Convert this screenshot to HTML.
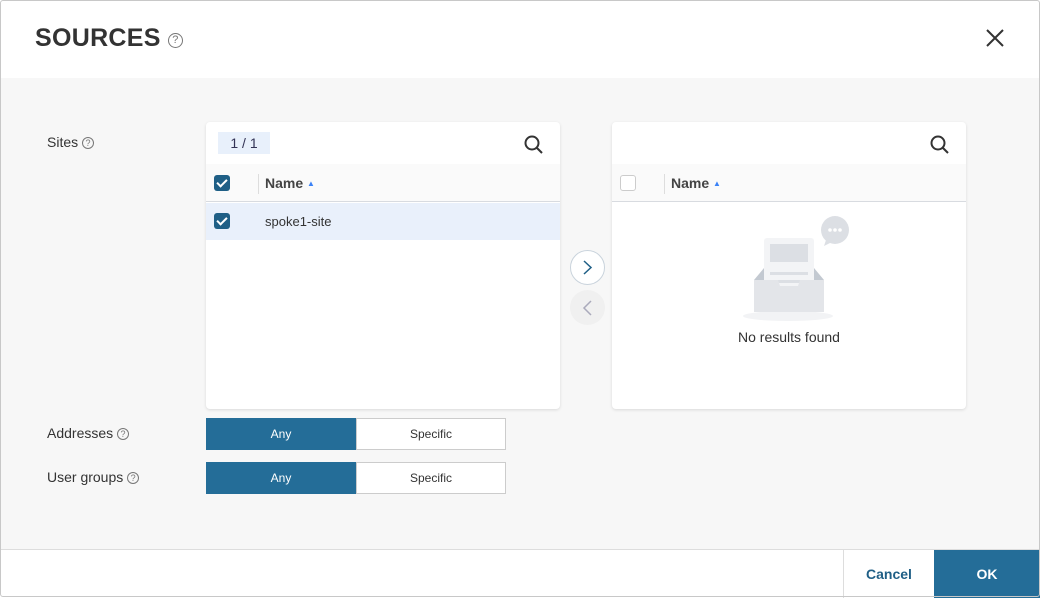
<!DOCTYPE html>
<html><head><style>
*{box-sizing:border-box;margin:0;padding:0}
body{width:1040px;height:597px;font-family:"Liberation Sans",sans-serif;background:#fff;position:relative;overflow:hidden;color:#333}
.frame{position:absolute;inset:0;border:1px solid #c8c8c8;border-radius:3px}
.hdr{position:absolute;left:0;top:0;width:1040px;height:78px;background:#fff}
.body{position:absolute;left:1px;top:78px;width:1038px;height:471px;background:#f7f7f7}
.ftr{position:absolute;left:0;top:549px;width:1040px;height:48px;border-top:1px solid #ddd;background:#fff}
.abs{position:absolute}
.q{display:inline-block;width:12px;height:12px;border:1px solid #777;border-radius:50%;font-size:9px;line-height:10px;text-align:center;color:#777;vertical-align:middle}
.lbl{position:absolute;font-size:14px;color:#333}
.panel{position:absolute;background:#fff;border-radius:4px;box-shadow:0 1px 3px rgba(0,0,0,.12)}
.th{position:absolute;left:0;top:42px;width:100%;height:38px;background:#fafafa;border-bottom:1px solid #d8dbe0}
.cb{position:absolute;width:16px;height:16px;border-radius:3px;background:#1f5f86}
.cb:after{content:"";position:absolute;left:5px;top:2px;width:4px;height:8px;border:solid #fff;border-width:0 2px 2px 0;transform:rotate(45deg)}
.seg{position:absolute;height:32px;font-size:12px;line-height:30px;text-align:center;border:1px solid #ccc}
</style></head><body>
<div class="hdr"><div class="abs" style="left:35px;top:24px;font-size:25px;font-weight:bold;color:#333;letter-spacing:.3px">SOURCES <span class="q" style="width:15px;height:15px;font-size:11px;line-height:13px;font-weight:normal;vertical-align:3px">?</span></div>
<svg class="abs" style="left:985px;top:28px" width="20" height="20"><path d="M2 2L18 18M18 2L2 18" stroke="#333" stroke-width="2"/></svg></div>
<div class="body">
<div class="lbl" style="left:46px;top:56px">Sites <span class="q">?</span></div>
<div class="lbl" style="left:46px;top:347px">Addresses <span class="q">?</span></div>
<div class="lbl" style="left:46px;top:391px">User groups <span class="q">?</span></div>
<div class="panel" style="left:205px;top:44px;width:354px;height:287px">
 <div class="abs" style="left:12px;top:10px;width:52px;height:22px;background:#e8f0fb;font-size:14px;line-height:22px;text-align:center;color:#335">1 / 1</div>
 <svg class="abs" style="left:318px;top:13px" width="20" height="20"><circle cx="8" cy="8" r="6.5" fill="none" stroke="#333" stroke-width="2"/><path d="M13 13L18 18" stroke="#333" stroke-width="2"/></svg>
 <div class="th"><div class="cb" style="left:8px;top:11px"></div><div class="abs" style="left:52px;top:10px;width:1px;height:20px;background:#ddd"></div><div class="abs" style="left:59px;top:11px;font-size:14px;font-weight:bold;color:#444">Name <span style="font-size:8px;color:#3b82f6;vertical-align:2px">▲</span></div></div>
 <div class="abs" style="left:0;top:81px;width:100%;height:37px;background:#e9f0fb"><div class="cb" style="left:8px;top:10px"></div><div class="abs" style="left:59px;top:11px;font-size:13px;color:#333">spoke1-site</div></div>
</div>
<div class="abs" style="left:569px;top:172px;width:35px;height:35px;border:1px solid #c9d3dc;border-radius:50%;background:#fff"><svg width="33" height="33"><path d="M13 10L20 16.5L13 23" fill="none" stroke="#1f5f86" stroke-width="1.5"/></svg></div>
<div class="abs" style="left:569px;top:212px;width:35px;height:35px;border-radius:50%;background:#f0f0f0"><svg width="35" height="35"><path d="M21 11L14 18L21 25" fill="none" stroke="#aab" stroke-width="1.5"/></svg></div>
<div class="panel" style="left:611px;top:44px;width:354px;height:287px">
 <svg class="abs" style="left:318px;top:13px" width="20" height="20"><circle cx="8" cy="8" r="6.5" fill="none" stroke="#333" stroke-width="2"/><path d="M13 13L18 18" stroke="#333" stroke-width="2"/></svg>
 <div class="th"><div class="abs" style="left:8px;top:11px;width:16px;height:16px;border:1px solid #ccc;border-radius:3px;background:#fff"></div><div class="abs" style="left:52px;top:10px;width:1px;height:20px;background:#ddd"></div><div class="abs" style="left:59px;top:11px;font-size:14px;font-weight:bold;color:#444">Name <span style="font-size:8px;color:#3b82f6;vertical-align:2px">▲</span></div></div>
 <svg class="abs" style="left:130px;top:94px" width="110" height="106"><ellipse cx="46" cy="100" rx="45" ry="5" fill="#f2f3f5"/><path d="M12 64L22 52H72L82 64Z" fill="#c3c9d1"/><rect x="22" y="22" width="50" height="62" rx="3" fill="#f3f4f6"/><rect x="28" y="28" width="38" height="18" fill="#dcdfe4"/><rect x="28" y="56" width="38" height="3" fill="#dcdfe4"/><rect x="28" y="64" width="38" height="3" fill="#dcdfe4"/><path d="M12 64H36L38 70H56L58 64H82V96H12Z" fill="#e3e5e9"/><circle cx="93" cy="14" r="14" fill="#dcdfe4"/><path d="M84 24L82 30L90 26Z" fill="#dcdfe4"/><circle cx="88" cy="14" r="1.8" fill="#fff"/><circle cx="93" cy="14" r="1.8" fill="#fff"/><circle cx="98" cy="14" r="1.8" fill="#fff"/></svg>
 <div class="abs" style="left:0;top:207px;width:100%;text-align:center;font-size:14px;color:#333">No results found</div>
</div>
<div class="seg" style="left:205px;top:340px;width:150px;background:#246d98;color:#fff;border-color:#246d98">Any</div>
<div class="seg" style="left:355px;top:340px;width:150px;background:#fff;color:#333">Specific</div>
<div class="seg" style="left:205px;top:384px;width:150px;background:#246d98;color:#fff;border-color:#246d98">Any</div>
<div class="seg" style="left:355px;top:384px;width:150px;background:#fff;color:#333">Specific</div>
</div>
<div class="ftr">
<div class="abs" style="left:843px;top:0;width:91px;height:48px;border-left:1px solid #ddd;font-size:14px;font-weight:bold;color:#1f5f86;text-align:center;line-height:48px">Cancel</div>
<div class="abs" style="left:934px;top:0;width:106px;height:48px;background:#246d98;font-size:14px;font-weight:bold;color:#fff;text-align:center;line-height:48px">OK</div>
</div>
<div class="frame"></div>
</body></html>
